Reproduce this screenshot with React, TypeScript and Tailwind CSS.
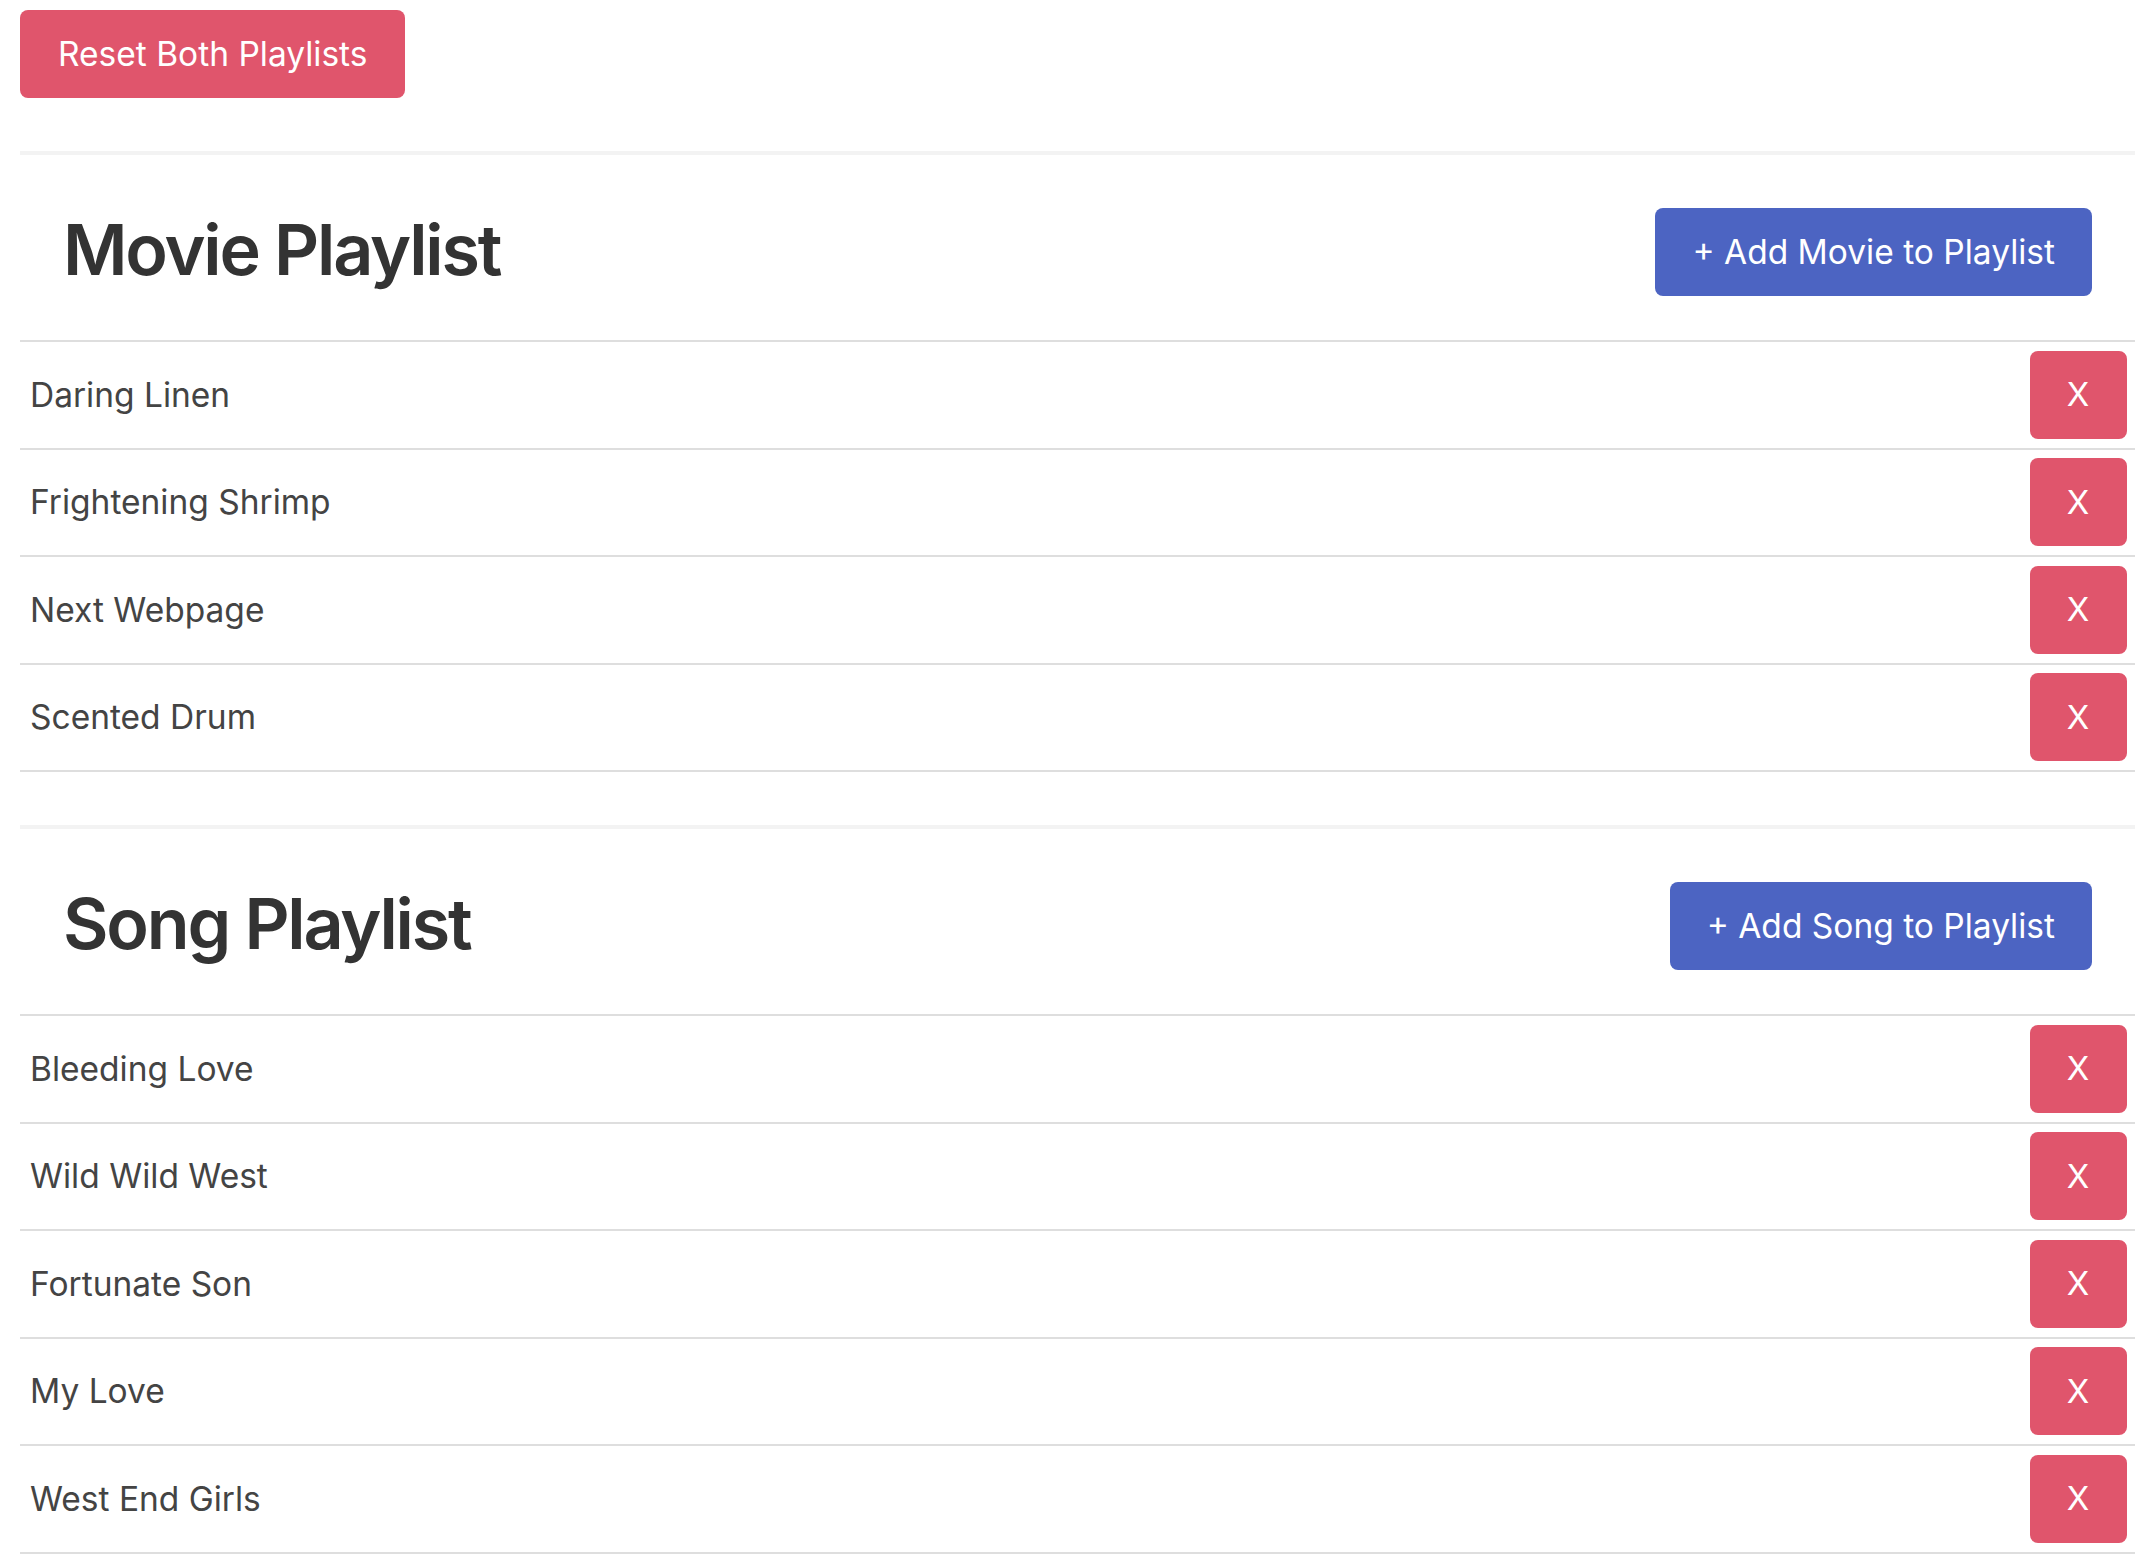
import { useState } from "react";

const MOVIES = ["Daring Linen", "Frightening Shrimp", "Next Webpage", "Scented Drum"];
const SONGS = ["Bleeding Love", "Wild Wild West", "Fortunate Son", "My Love", "West End Girls"];

type PlaylistProps = {
  title: string;
  addLabel: string;
  items: string[];
  onRemove: (index: number) => void;
};

function Playlist({ title, addLabel, items, onRemove }: PlaylistProps) {
  return (
    <section className="border-t-4 border-[#f3f3f3]">
      <div className="flex h-[185px] items-center justify-between pt-[9px] px-[43px]">
        <h1 className="mb-[5px] text-[70px] font-semibold leading-none tracking-[-2.2px] text-[#333333]">
          {title}
        </h1>
        <button
          type="button"
          className="h-[88px] rounded-[8px] bg-[#4c64c2] px-[37px] text-[33.5px] text-white"
        >
          {addLabel}
        </button>
      </div>

      <ul className="border-b-2 border-[#dedede]">
        {items.map((item, i) => (
          <li
            key={item}
            className="flex items-center justify-between border-t-2 border-[#dedede] py-[8.75px] pl-[10px] pr-[8.5px]"
          >
            <span className="text-[33.5px] text-[#444444]">{item}</span>
            <button
              type="button"
              onClick={() => onRemove(i)}
              className="h-[88px] w-[97px] rounded-[8px] bg-[#e0556c] text-[33px] text-white"
            >
              X
            </button>
          </li>
        ))}
      </ul>
    </section>
  );
}

export default function App() {
  const [movies, setMovies] = useState(MOVIES);
  const [songs, setSongs] = useState(SONGS);

  return (
    <div className="min-h-screen bg-white pl-[20px] pr-[11px] pt-[10px] font-['Inter',sans-serif]">
      <button
        type="button"
        onClick={() => {
          setMovies(MOVIES);
          setSongs(SONGS);
        }}
        className="h-[88px] rounded-[8px] bg-[#e0556c] px-[38px] text-[33.5px] text-white"
      >
        Reset Both Playlists
      </button>

      <div className="mt-[53px]">
        <Playlist
          title="Movie Playlist"
          addLabel="+ Add Movie to Playlist"
          items={movies}
          onRemove={(i) => setMovies(movies.filter((_, j) => j !== i))}
        />
      </div>

      <div className="mt-[53px]">
        <Playlist
          title="Song Playlist"
          addLabel="+ Add Song to Playlist"
          items={songs}
          onRemove={(i) => setSongs(songs.filter((_, j) => j !== i))}
        />
      </div>
    </div>
  );
}
